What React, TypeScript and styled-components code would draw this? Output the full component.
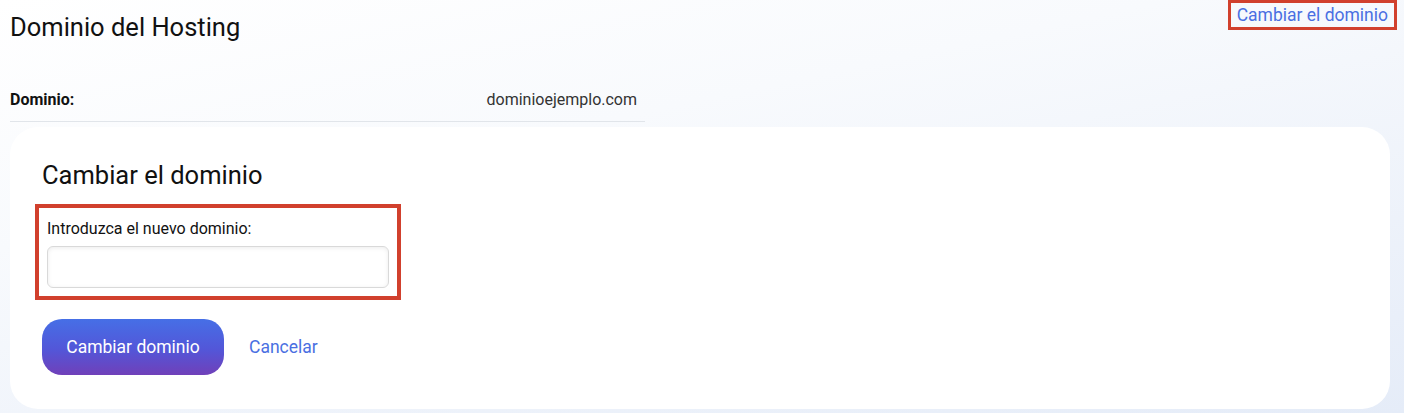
import React, { useState } from "react";
import styled, { createGlobalStyle } from "styled-components";

const GlobalStyle = createGlobalStyle`
  html, body {
    margin: 0;
    padding: 0;
  }
  body {
    font-family: Roboto, "Liberation Sans", Arial, sans-serif;
    color: #111;
    background: linear-gradient(168deg, #ffffff 0%, #f8fafd 35%, #e5ecf8 100%);
    min-height: 413px;
  }
`;

const Page = styled.div`
  padding: 0 14px 4px 10px;
  min-height: 413px;
  box-sizing: border-box;
`;

const Header = styled.div`
  display: flex;
  justify-content: space-between;
  align-items: flex-start;
`;

const Title = styled.h1`
  margin: 0;
  padding-top: 12px;
  font-size: 25.5px;
  line-height: 30px;
  font-weight: 400;
  color: #111;
`;

const Highlight = styled.div<{ $thick?: boolean }>`
  border: ${(p) => (p.$thick ? "4px" : "3px")} solid #d1402d;
  box-sizing: border-box;
`;

const HeaderBox = styled(Highlight)`
  margin-right: -7px;
`;

const HeaderLink = styled.a`
  display: block;
  padding: 0 6px;
  font-size: 17.5px;
  line-height: 24px;
  color: #4a6fe2;
  text-decoration: none;
  cursor: pointer;
`;

const InfoRow = styled.div`
  display: flex;
  justify-content: space-between;
  align-items: center;
  width: 635px;
  height: 45px;
  margin-top: 35px;
  padding-right: 8px;
  box-sizing: border-box;
  border-bottom: 1px solid #e1e5ea;
`;

const InfoLabel = styled.span`
  font-size: 16px;
  font-weight: 700;
  color: #111;
`;

const InfoValue = styled.span`
  font-size: 16px;
  color: #333;
`;

const Card = styled.div`
  margin-top: 5px;
  background: #fff;
  border-radius: 28px;
  padding: 33px 32px 34px;
  height: 282px;
  box-sizing: border-box;
`;

const CardTitle = styled.h2`
  margin: 0 0 14px;
  font-size: 25.5px;
  line-height: 30px;
  font-weight: 400;
  color: #111;
`;

const FieldBox = styled(Highlight)`
  width: 366px;
  margin-left: -7px;
  padding: 11px 8px 8px;
  display: flex;
  flex-direction: column;
  gap: 7px;
`;

const FieldLabel = styled.label`
  font-size: 16px;
  line-height: 20px;
  color: #111;
`;

const TextInput = styled.input`
  height: 42px;
  width: 100%;
  box-sizing: border-box;
  border: 1px solid #d9d9d9;
  border-radius: 6px;
  box-shadow: inset 0 1px 4px rgba(0, 0, 0, 0.08);
  padding: 0 12px;
  font-family: inherit;
  font-size: 16px;
  outline: none;
`;

const Actions = styled.div`
  display: flex;
  align-items: center;
  gap: 25px;
  margin-top: 19px;
`;

const PrimaryButton = styled.button`
  width: 182px;
  height: 56px;
  border: none;
  border-radius: 20px;
  background: linear-gradient(180deg, #466fe6 0%, #5356d8 55%, #7040b9 100%);
  color: #fff;
  font-family: inherit;
  font-size: 17.5px;
  cursor: pointer;
`;

const TextButton = styled.button`
  border: none;
  background: none;
  padding: 0;
  font-family: inherit;
  font-size: 17.5px;
  color: #4a6fe2;
  cursor: pointer;
`;

export default function App() {
  const [domain, setDomain] = useState("");

  return (
    <Page>
      <GlobalStyle />
      <Header>
        <Title>Dominio del Hosting</Title>
        <HeaderBox>
          <HeaderLink>Cambiar el dominio</HeaderLink>
        </HeaderBox>
      </Header>

      <InfoRow>
        <InfoLabel>Dominio:</InfoLabel>
        <InfoValue>dominioejemplo.com</InfoValue>
      </InfoRow>

      <Card>
        <CardTitle>Cambiar el dominio</CardTitle>
        <FieldBox $thick>
          <FieldLabel htmlFor="new-domain">Introduzca el nuevo dominio:</FieldLabel>
          <TextInput
            id="new-domain"
            value={domain}
            onChange={(e) => setDomain(e.target.value)}
          />
        </FieldBox>
        <Actions>
          <PrimaryButton>Cambiar dominio</PrimaryButton>
          <TextButton>Cancelar</TextButton>
        </Actions>
      </Card>
    </Page>
  );
}
